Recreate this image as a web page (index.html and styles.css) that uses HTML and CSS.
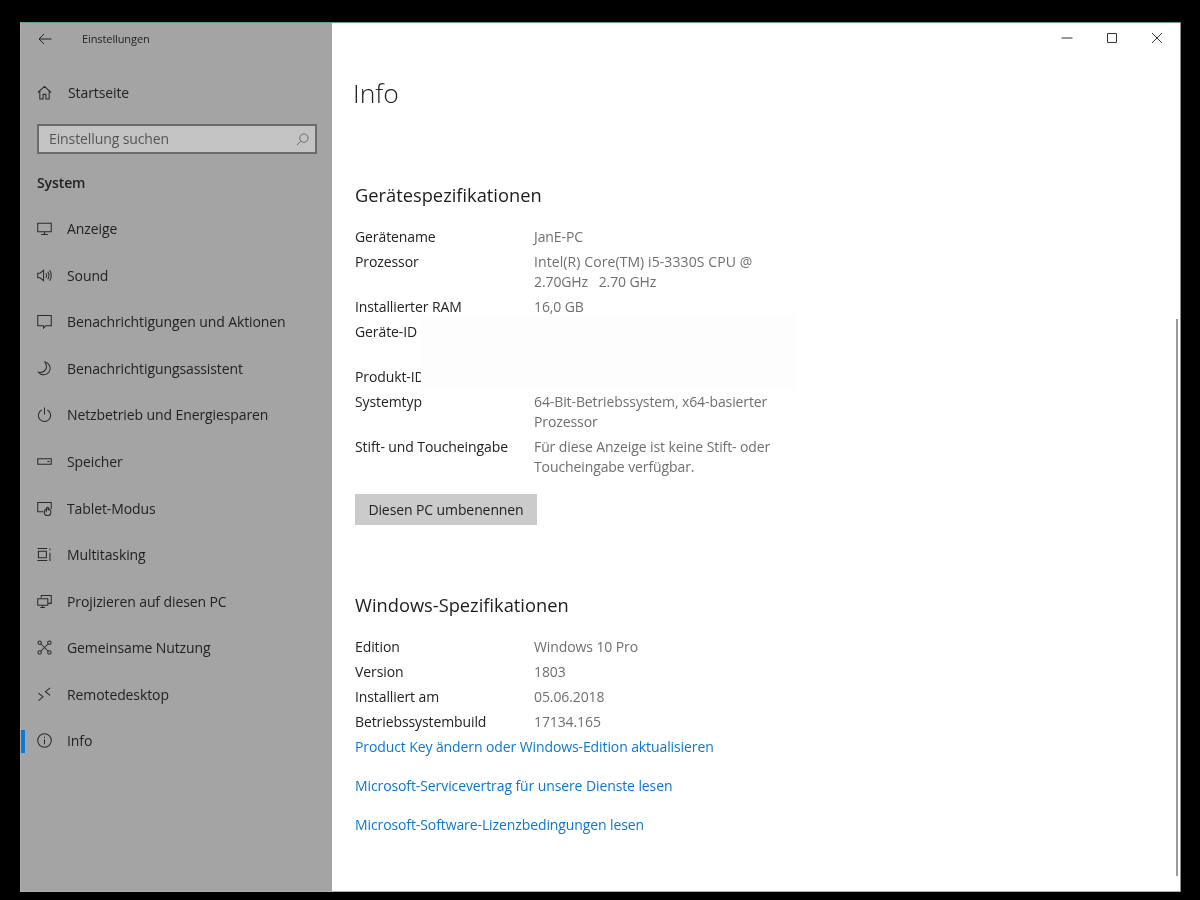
FILE: index.html
```html
<!DOCTYPE html>
<html lang="de">
<head>
<meta charset="utf-8">
<title>Einstellungen</title>
<link rel="stylesheet" href="styles.css">
</head>
<body>
<div class="window">
  <aside class="sidebar">
    <div class="titlebar">
      <svg class="back" viewBox="0 0 14 12"><path d="M13.5 6H1M6 1 1 6l5 5"/></svg>
      <span class="app-name">Einstellungen</span>
    </div>
    <div class="home-row">
      <svg class="icon" viewBox="0 0 16 16"><path d="M1 8 8 1.5 15 8M3 6.5V15h3.5v-5h3v5H13V6.5"/></svg>
      <span class="home-label">Startseite</span>
    </div>
    <div class="search">
      <span>Einstellung suchen</span>
      <svg class="search-icon" viewBox="0 0 14 14"><circle cx="8.5" cy="5.5" r="4.5"/><path d="M5.3 8.7 1 13"/></svg>
    </div>
    <div class="group">System</div>
    <nav class="nav">
      <div class="nav-item"><svg class="icon" viewBox="0 0 16 16"><path d="M.8 2.5h14.4v9H.8zM8 11.5v3M4.5 14.5h7"/></svg><span>Anzeige</span></div>
      <div class="nav-item"><svg class="icon" viewBox="0 0 16 16"><path d="M.8 5.5h2.4L7 2.5v11l-3.800-3H.8zM9.500 5.500q1.500 2.500 0 5M11.500 4q2.500 4 0 8M13.500 2.500q3.500 5.500 0 11"/></svg><span>Sound</span></div>
      <div class="nav-item"><svg class="icon" viewBox="0 0 16 16"><path d="M.8 1.500h14.400v11H9.500l-2.500 2.500v-2.500H.8z"/></svg><span>Benachrichtigungen und Aktionen</span></div>
      <div class="nav-item"><svg class="icon" viewBox="0 0 16 16"><path d="M8.500 1q5 1.500 5.500 6.500A7 7 0 0 1 1.500 12q6.500 1 8.500-4.500Q10.500 4 8.500 1z"/></svg><span>Benachrichtigungsassistent</span></div>
      <div class="nav-item"><svg class="icon" viewBox="0 0 16 16"><path d="M5 3.200a6.500 6.500 0 1 0 6 0M8 .5V8"/></svg><span>Netzbetrieb und Energiesparen</span></div>
      <div class="nav-item"><svg class="icon" viewBox="0 0 16 16"><path d="M.8 5h14.400v6H.8zM11 8h2.500"/></svg><span>Speicher</span></div>
      <div class="nav-item"><svg class="icon" viewBox="0 0 16 16"><path d="M7 11.500H.8V1.500h14.400v7M10 12V7.500q1.300-1.500 2.500 0V10"/><circle cx="11.300" cy="12" r="3.500"/></svg><span>Tablet-Modus</span></div>
      <div class="nav-item"><svg class="icon" viewBox="0 0 16 16"><path d="M.5 1.500h10.500M.5 14.500h10.500M1.500 4.500h8.500v7H1.500zM13.800 1.500v2M13.800 6v9"/></svg><span>Multitasking</span></div>
      <div class="nav-item"><svg class="icon" viewBox="0 0 16 16"><path d="M4.500 4V1.500h10.700V10H12M.8 5h10.700v7H.8zM3.500 14.500h5M6 12v2.500"/></svg><span>Projizieren auf diesen PC</span></div>
      <div class="nav-item"><svg class="icon" viewBox="0 0 16 16"><circle cx="2.800" cy="2.800" r="1.800"/><circle cx="13.200" cy="2.800" r="1.800"/><circle cx="2.800" cy="13.200" r="1.800"/><circle cx="13.200" cy="13.200" r="1.800"/><path d="M4 4q4 4 8 8M12 4q-4 4-8 8"/></svg><span>Gemeinsame Nutzung</span></div>
      <div class="nav-item"><svg class="icon" viewBox="0 0 16 16"><path d="m1.500 6.500 5 4-5 4M14 1 9 5l5 4"/></svg><span>Remotedesktop</span></div>
      <div class="nav-item is-active"><svg class="icon" viewBox="0 0 16 16"><circle cx="8" cy="8" r="7.200"/><path d="M8 7v5M8 4v1.300"/></svg><span>Info</span></div>
    </nav>
  </aside>
  <main class="content">
    <div class="controls">
      <svg class="ctl" viewBox="0 0 12 12"><path d="M.5 6h11"/></svg>
      <svg class="ctl" viewBox="0 0 12 12"><path d="M1.500 1.500h9v9h-9z"/></svg>
      <svg class="ctl" viewBox="0 0 12 12"><path d="m1 1 10 10M11 1 1 11"/></svg>
    </div>
    <h1 class="page-title">Info</h1>
    <section class="section-device">
      <h2 class="heading">Gerätespezifikationen</h2>
      <dl class="specs">
        <dt>Gerätename</dt><dd>JanE-PC</dd>
        <dt>Prozessor</dt><dd><span class="cpu-line">Intel(R) Core(TM) i5-3330S CPU @</span><br>2.70GHz&nbsp;&nbsp; 2.70 GHz</dd>
        <dt>Installierter RAM</dt><dd>16,0 GB</dd>
        <dt>Geräte-ID</dt><dd class="blank"></dd>
        <dt>Produkt-ID</dt><dd></dd>
        <dt>Systemtyp</dt><dd>64-Bit-Betriebssystem, x64-basierter<br>Prozessor</dd>
        <dt>Stift- und Toucheingabe</dt><dd>Für diese Anzeige ist keine Stift- oder<br>Toucheingabe verfügbar.</dd>
      </dl>
      <button class="rename" type="button">Diesen PC umbenennen</button>
      <div class="redaction"></div>
    </section>
    <section class="section-windows">
      <h2 class="heading">Windows-Spezifikationen</h2>
      <dl class="specs">
        <dt>Edition</dt><dd>Windows 10 Pro</dd>
        <dt>Version</dt><dd>1803</dd>
        <dt>Installiert am</dt><dd>05.06.2018</dd>
        <dt>Betriebssystembuild</dt><dd>17134.165</dd>
      </dl>
      <div class="links">
        <a href="#">Product Key ändern oder Windows-Edition aktualisieren</a>
        <a href="#">Microsoft-Servicevertrag für unsere Dienste lesen</a>
        <a href="#">Microsoft-Software-Lizenzbedingungen lesen</a>
      </div>
    </section>
    <div class="scrollbar"></div>
  </main>
</div>
</body>
</html>
```
FILE: styles.css
```css
* { box-sizing: border-box; }
html, body { margin: 0; height: 100%; }
body {
  background: #000;
  font-family: "Open Sans", "Noto Sans", sans-serif;
  font-size: 14px;
  letter-spacing: -0.1px;
  color: #1f1f1f;
  padding: 22px 19px 8px 20px;
}
.window {
  display: flex;
  width: 1161px;
  height: 870px;
  border-top: 1px solid #5f9f8a;
  border-right: 1px solid #8a8a8a;
  border-bottom: 1px solid #b0b0b0;
  border-left: 1px solid #b0b0b0;
  background: #fff;
  filter: blur(0.3px);
}
.sidebar {
  width: 311px;
  flex: none;
  background: #a4a4a4;
  padding-left: 16px;
}
.titlebar {
  display: flex;
  align-items: center;
  height: 31px;
  gap: 30px;
}
.back {
  width: 14px;
  height: 12px;
  margin-left: 1px;
  fill: none;
  stroke: #222;
  stroke-width: 1;
}
.app-name { font-size: 11px; color: #222; }
.home-row {
  display: flex;
  align-items: center;
  height: 46px;
  margin-top: 15px;
  gap: 16px;
  color: #222;
}
.icon {
  width: 15px;
  height: 15px;
  flex: none;
  fill: none;
  stroke: #2a2a2a;
  stroke-width: 1.100;
}
.search {
  display: flex;
  align-items: center;
  justify-content: space-between;
  width: 280px;
  height: 30px;
  margin-top: 9px;
  padding: 0 6px 2px 10px;
  border: 2px solid #6b6b6b;
  background: #c3c3c3;
  color: #565656;
}
.search-icon {
  width: 13px;
  height: 13px;
  margin-top: 2px;
  fill: none;
  stroke: #666;
  stroke-width: 1;
}
.group {
  height: 30px;
  margin-top: 14px;
  line-height: 30px;
  font-weight: 600;
  color: #222;
}
.nav { margin-top: 7.500px; }
.nav-item {
  position: relative;
  display: flex;
  align-items: center;
  height: 46.550px;
  gap: 15px;
  color: #222;
}
.is-active::before {
  content: "";
  position: absolute;
  left: -16px;
  top: 12px;
  width: 4px;
  height: 23px;
  background: #0a7ad8;
}
.content {
  position: relative;
  flex: 1;
  min-width: 0;
  padding-left: 21px;
}
.controls {
  display: flex;
  justify-content: flex-end;
  align-items: center;
  height: 30px;
  gap: 33px;
  padding-right: 17px;
}
.ctl {
  width: 12px;
  height: 12px;
  fill: none;
  stroke: #333;
  stroke-width: 1;
}
.page-title {
  margin: 20px 0 0;
  height: 40px;
  line-height: 40px;
  font-size: 26.500px;
  font-weight: 300;
  letter-spacing: 0;
  color: #222;
}
.section-device {
  position: relative;
  margin-top: 68px;
  padding-left: 2px;
}
.section-windows {
  margin-top: 66px;
  padding-left: 2px;
}
.heading {
  margin: 0 0 18px;
  height: 28px;
  line-height: 28px;
  font-size: 18.300px;
  font-weight: 400;
  letter-spacing: 0;
  color: #1c1c1c;
}
.specs {
  display: grid;
  grid-template-columns: 179px 1fr;
  row-gap: 5px;
  margin: 0;
  line-height: 20px;
}
.specs dt { color: #222; }
.specs dd { margin: 0; color: #6f6f6f; }
.specs .blank { min-height: 40px; }
.cpu-line { letter-spacing: 0.09px; }
.rename {
  display: block;
  width: 182px;
  height: 31px;
  margin-top: 17px;
  padding: 0;
  border: 0;
  background: #cbcbcb;
  font: inherit;
  letter-spacing: inherit;
  color: #222;
}
.redaction {
  position: absolute;
  left: 68px;
  top: 133px;
  width: 375px;
  height: 76px;
  background: #fdfdfd;
}
.links {
  display: flex;
  flex-direction: column;
  align-items: flex-start;
  gap: 19px;
  margin-top: 5px;
  line-height: 20px;
}
.links a { color: #0a78d4; text-decoration: none; }
.scrollbar {
  position: absolute;
  right: 2px;
  top: 296px;
  width: 2px;
  height: 557px;
  background: #9a9a9a;
}
```
